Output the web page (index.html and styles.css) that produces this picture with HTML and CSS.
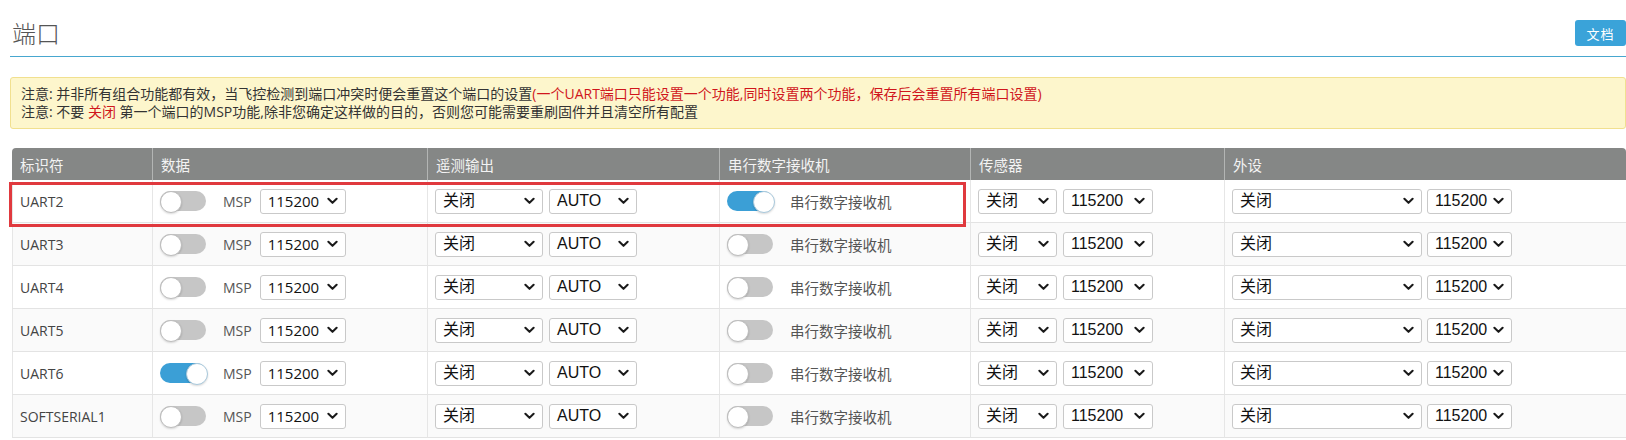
FILE: index.html
```html
<!DOCTYPE html>
<html lang="zh-CN">
<head>
<meta charset="utf-8">
<title>端口</title>
<link rel="stylesheet" href="styles.css">
</head>
<body>
<div class="page">
  <div class="head">
    <h1 class="title">端口</h1>
    <a class="doc-btn">文档</a>
  </div>

  <div class="note">
    <p>注意: 并非所有组合功能都有效，当飞控检测到端口冲突时便会重置这个端口的设置<span class="red">(一个UART端口只能设置一个功能,同时设置两个功能，保存后会重置所有端口设置)</span></p>
    <p>注意: 不要 <span class="red">关闭</span> 第一个端口的MSP功能,除非您确定这样做的目的，否则您可能需要重刷固件并且清空所有配置</p>
  </div>

  <div class="table-wrap">
    <table class="ports">
      <colgroup>
        <col class="c-id"><col class="c-data"><col class="c-tel"><col class="c-rx"><col class="c-sens"><col class="c-per">
      </colgroup>
      <thead>
        <tr><th>标识符</th><th>数据</th><th>遥测输出</th><th>串行数字接收机</th><th>传感器</th><th>外设</th></tr>
      </thead>
      <tbody>
        <tr>
          <td class="id">UART2</td>
          <td><div class="cell"><span class="toggle"></span><span class="lbl">MSP</span><span class="sel s-data"><span>115200</span><svg class="chev" viewBox="0 0 12 8"><path d="M1.5 1.5L6 6l4.5-4.5"/></svg></span></div></td>
          <td><div class="cell g6"><span class="sel s-tel"><span>关闭</span><svg class="chev" viewBox="0 0 12 8"><path d="M1.5 1.5L6 6l4.5-4.5"/></svg></span><span class="sel s-auto"><span>AUTO</span><svg class="chev" viewBox="0 0 12 8"><path d="M1.5 1.5L6 6l4.5-4.5"/></svg></span></div></td>
          <td><div class="cell"><span class="toggle on"></span><span class="rx">串行数字接收机</span></div></td>
          <td><div class="cell g6"><span class="sel s-sens"><span>关闭</span><svg class="chev" viewBox="0 0 12 8"><path d="M1.5 1.5L6 6l4.5-4.5"/></svg></span><span class="sel s-baud"><span>115200</span><svg class="chev" viewBox="0 0 12 8"><path d="M1.5 1.5L6 6l4.5-4.5"/></svg></span></div></td>
          <td><div class="cell g5"><span class="sel s-per"><span>关闭</span><svg class="chev" viewBox="0 0 12 8"><path d="M1.5 1.5L6 6l4.5-4.5"/></svg></span><span class="sel s-pbaud"><span>115200</span><svg class="chev" viewBox="0 0 12 8"><path d="M1.5 1.5L6 6l4.5-4.5"/></svg></span></div></td>
        </tr>
        <tr>
          <td class="id">UART3</td>
          <td><div class="cell"><span class="toggle"></span><span class="lbl">MSP</span><span class="sel s-data"><span>115200</span><svg class="chev" viewBox="0 0 12 8"><path d="M1.5 1.5L6 6l4.5-4.5"/></svg></span></div></td>
          <td><div class="cell g6"><span class="sel s-tel"><span>关闭</span><svg class="chev" viewBox="0 0 12 8"><path d="M1.5 1.5L6 6l4.5-4.5"/></svg></span><span class="sel s-auto"><span>AUTO</span><svg class="chev" viewBox="0 0 12 8"><path d="M1.5 1.5L6 6l4.5-4.5"/></svg></span></div></td>
          <td><div class="cell"><span class="toggle"></span><span class="rx">串行数字接收机</span></div></td>
          <td><div class="cell g6"><span class="sel s-sens"><span>关闭</span><svg class="chev" viewBox="0 0 12 8"><path d="M1.5 1.5L6 6l4.5-4.5"/></svg></span><span class="sel s-baud"><span>115200</span><svg class="chev" viewBox="0 0 12 8"><path d="M1.5 1.5L6 6l4.5-4.5"/></svg></span></div></td>
          <td><div class="cell g5"><span class="sel s-per"><span>关闭</span><svg class="chev" viewBox="0 0 12 8"><path d="M1.5 1.5L6 6l4.5-4.5"/></svg></span><span class="sel s-pbaud"><span>115200</span><svg class="chev" viewBox="0 0 12 8"><path d="M1.5 1.5L6 6l4.5-4.5"/></svg></span></div></td>
        </tr>
        <tr>
          <td class="id">UART4</td>
          <td><div class="cell"><span class="toggle"></span><span class="lbl">MSP</span><span class="sel s-data"><span>115200</span><svg class="chev" viewBox="0 0 12 8"><path d="M1.5 1.5L6 6l4.5-4.5"/></svg></span></div></td>
          <td><div class="cell g6"><span class="sel s-tel"><span>关闭</span><svg class="chev" viewBox="0 0 12 8"><path d="M1.5 1.5L6 6l4.5-4.5"/></svg></span><span class="sel s-auto"><span>AUTO</span><svg class="chev" viewBox="0 0 12 8"><path d="M1.5 1.5L6 6l4.5-4.5"/></svg></span></div></td>
          <td><div class="cell"><span class="toggle"></span><span class="rx">串行数字接收机</span></div></td>
          <td><div class="cell g6"><span class="sel s-sens"><span>关闭</span><svg class="chev" viewBox="0 0 12 8"><path d="M1.5 1.5L6 6l4.5-4.5"/></svg></span><span class="sel s-baud"><span>115200</span><svg class="chev" viewBox="0 0 12 8"><path d="M1.5 1.5L6 6l4.5-4.5"/></svg></span></div></td>
          <td><div class="cell g5"><span class="sel s-per"><span>关闭</span><svg class="chev" viewBox="0 0 12 8"><path d="M1.5 1.5L6 6l4.5-4.5"/></svg></span><span class="sel s-pbaud"><span>115200</span><svg class="chev" viewBox="0 0 12 8"><path d="M1.5 1.5L6 6l4.5-4.5"/></svg></span></div></td>
        </tr>
        <tr>
          <td class="id">UART5</td>
          <td><div class="cell"><span class="toggle"></span><span class="lbl">MSP</span><span class="sel s-data"><span>115200</span><svg class="chev" viewBox="0 0 12 8"><path d="M1.5 1.5L6 6l4.5-4.5"/></svg></span></div></td>
          <td><div class="cell g6"><span class="sel s-tel"><span>关闭</span><svg class="chev" viewBox="0 0 12 8"><path d="M1.5 1.5L6 6l4.5-4.5"/></svg></span><span class="sel s-auto"><span>AUTO</span><svg class="chev" viewBox="0 0 12 8"><path d="M1.5 1.5L6 6l4.5-4.5"/></svg></span></div></td>
          <td><div class="cell"><span class="toggle"></span><span class="rx">串行数字接收机</span></div></td>
          <td><div class="cell g6"><span class="sel s-sens"><span>关闭</span><svg class="chev" viewBox="0 0 12 8"><path d="M1.5 1.5L6 6l4.5-4.5"/></svg></span><span class="sel s-baud"><span>115200</span><svg class="chev" viewBox="0 0 12 8"><path d="M1.5 1.5L6 6l4.5-4.5"/></svg></span></div></td>
          <td><div class="cell g5"><span class="sel s-per"><span>关闭</span><svg class="chev" viewBox="0 0 12 8"><path d="M1.5 1.5L6 6l4.5-4.5"/></svg></span><span class="sel s-pbaud"><span>115200</span><svg class="chev" viewBox="0 0 12 8"><path d="M1.5 1.5L6 6l4.5-4.5"/></svg></span></div></td>
        </tr>
        <tr>
          <td class="id">UART6</td>
          <td><div class="cell"><span class="toggle on"></span><span class="lbl">MSP</span><span class="sel s-data"><span>115200</span><svg class="chev" viewBox="0 0 12 8"><path d="M1.5 1.5L6 6l4.5-4.5"/></svg></span></div></td>
          <td><div class="cell g6"><span class="sel s-tel"><span>关闭</span><svg class="chev" viewBox="0 0 12 8"><path d="M1.5 1.5L6 6l4.5-4.5"/></svg></span><span class="sel s-auto"><span>AUTO</span><svg class="chev" viewBox="0 0 12 8"><path d="M1.5 1.5L6 6l4.5-4.5"/></svg></span></div></td>
          <td><div class="cell"><span class="toggle"></span><span class="rx">串行数字接收机</span></div></td>
          <td><div class="cell g6"><span class="sel s-sens"><span>关闭</span><svg class="chev" viewBox="0 0 12 8"><path d="M1.5 1.5L6 6l4.5-4.5"/></svg></span><span class="sel s-baud"><span>115200</span><svg class="chev" viewBox="0 0 12 8"><path d="M1.5 1.5L6 6l4.5-4.5"/></svg></span></div></td>
          <td><div class="cell g5"><span class="sel s-per"><span>关闭</span><svg class="chev" viewBox="0 0 12 8"><path d="M1.5 1.5L6 6l4.5-4.5"/></svg></span><span class="sel s-pbaud"><span>115200</span><svg class="chev" viewBox="0 0 12 8"><path d="M1.5 1.5L6 6l4.5-4.5"/></svg></span></div></td>
        </tr>
        <tr>
          <td class="id">SOFTSERIAL1</td>
          <td><div class="cell"><span class="toggle"></span><span class="lbl">MSP</span><span class="sel s-data"><span>115200</span><svg class="chev" viewBox="0 0 12 8"><path d="M1.5 1.5L6 6l4.5-4.5"/></svg></span></div></td>
          <td><div class="cell g6"><span class="sel s-tel"><span>关闭</span><svg class="chev" viewBox="0 0 12 8"><path d="M1.5 1.5L6 6l4.5-4.5"/></svg></span><span class="sel s-auto"><span>AUTO</span><svg class="chev" viewBox="0 0 12 8"><path d="M1.5 1.5L6 6l4.5-4.5"/></svg></span></div></td>
          <td><div class="cell"><span class="toggle"></span><span class="rx">串行数字接收机</span></div></td>
          <td><div class="cell g6"><span class="sel s-sens"><span>关闭</span><svg class="chev" viewBox="0 0 12 8"><path d="M1.5 1.5L6 6l4.5-4.5"/></svg></span><span class="sel s-baud"><span>115200</span><svg class="chev" viewBox="0 0 12 8"><path d="M1.5 1.5L6 6l4.5-4.5"/></svg></span></div></td>
          <td><div class="cell g5"><span class="sel s-per"><span>关闭</span><svg class="chev" viewBox="0 0 12 8"><path d="M1.5 1.5L6 6l4.5-4.5"/></svg></span><span class="sel s-pbaud"><span>115200</span><svg class="chev" viewBox="0 0 12 8"><path d="M1.5 1.5L6 6l4.5-4.5"/></svg></span></div></td>
        </tr>
      </tbody>
    </table>
    <div class="highlight"></div>
  </div>
</div>
</body>
</html>
```

FILE: styles.css
```css
* { box-sizing: border-box; }

html, body {
  margin: 0;
  padding: 0;
  background: #ffffff;
}

body {
  font-family: "Open Sans", "Noto Sans CJK SC", sans-serif;
  color: #333333;
  overflow: hidden;
}

.page {
  padding-left: 10px;
  width: 1626px;
}

.head {
  display: flex;
  align-items: center;
  justify-content: space-between;
  height: 57px;
  padding-top: 10px;
  border-bottom: 1px solid #47a7cf;
}

.title {
  margin: 0 0 0 2px;
  font-family: "Noto Sans CJK SC", sans-serif;
  font-weight: 300;
  font-size: 24px;
  line-height: 30px;
  color: #555555;
}

.doc-btn {
  display: flex;
  align-items: center;
  justify-content: center;
  width: 51px;
  height: 26px;
  border-radius: 3px;
  background: #3aa3d9;
  color: #ffffff;
  font-family: "Noto Sans CJK SC", sans-serif;
  font-size: 13px;
  letter-spacing: 1px;
}

.note {
  margin-top: 20px;
  height: 52px;
  padding: 7px 10px;
  border: 1px solid #f1e08f;
  border-radius: 3px;
  background: #fdf6cc;
  font-family: "Open Sans", "Noto Sans CJK SC", sans-serif;
  font-size: 14px;
  line-height: 18px;
  color: #333333;
}

.note p {
  margin: 0;
  white-space: nowrap;
}

.red { color: #d0161c; }

.table-wrap {
  position: relative;
  margin-top: 19px;
  margin-left: 2px;
  width: 1614px;
}

.ports {
  width: 1614px;
  table-layout: fixed;
  border-collapse: separate;
  border-spacing: 0;
}

.c-id { width: 140px; }
.c-data { width: 275px; }
.c-tel { width: 292px; }
.c-rx { width: 251px; }
.c-sens { width: 254px; }
.c-per { width: 402px; }

.ports th {
  height: 32px;
  padding: 0 8px;
  background: #858786;
  color: #f3f3f3;
  font-family: "Noto Sans CJK SC", sans-serif;
  font-weight: 400;
  font-size: 14.5px;
  text-align: left;
  border-left: 1px solid #b3b5b4;
}

.ports th:first-child {
  border-left: none;
  border-top-left-radius: 4px;
}

.ports th:last-child {
  border-top-right-radius: 4px;
}

.ports td {
  height: 43px;
  padding: 0 7px;
  border-bottom: 1px solid #e3e3e3;
  border-left: 1px solid #e6e6e6;
  background: #ffffff;
  vertical-align: middle;
}

.ports tbody tr:nth-child(even) td { background: #fafafa; }

.ports td.id {
  font-size: 14px;
  color: #444444;
  padding-left: 7px;
}

.cell {
  display: flex;
  align-items: center;
}

.g6 { gap: 6px; }
.g5 { gap: 5px; }

.toggle {
  position: relative;
  width: 46px;
  height: 20px;
  border-radius: 10px;
  background: #c6c6c6;
  flex: none;
}

.toggle::after {
  content: "";
  position: absolute;
  left: 0;
  top: 0;
  width: 20px;
  height: 20px;
  border-radius: 50%;
  background: #ffffff;
  border: 1px solid #bdbdbd;
  box-shadow: 0 1px 2px rgba(0, 0, 0, 0.15);
}

.toggle.on { background: #3b9fd6; }
.toggle.on::after { left: 26px; border-color: #a9c9dc; }

.lbl {
  margin-left: 17px;
  margin-right: 8px;
  font-size: 14px;
  color: #555555;
}

.rx {
  margin-left: 17px;
  font-family: "Noto Sans CJK SC", sans-serif;
  font-size: 14.5px;
  color: #555555;
}

.sel {
  display: flex;
  align-items: center;
  justify-content: space-between;
  height: 25px;
  padding: 0 7px 0 7px;
  border: 1px solid #c9c9c9;
  border-radius: 3px;
  background: #ffffff;
  font-family: "Liberation Sans", "Noto Sans CJK SC", sans-serif;
  font-size: 16px;
  color: #111111;
  flex: none;
}

.sel span { line-height: 20px; white-space: nowrap; }

.chev {
  width: 11px;
  height: 8px;
  flex: none;
  fill: none;
  stroke: #1a1a1a;
  stroke-width: 2.2;
  stroke-linecap: round;
  stroke-linejoin: round;
}

.s-data {
  width: 86px;
  font-family: "Open Sans", sans-serif;
  font-size: 15px;
}
.s-tel { width: 108px; }
.s-auto { width: 88px; }
.s-sens { width: 79px; }
.s-baud { width: 90px; }
.s-per { width: 190px; }
.s-pbaud { width: 85px; }

.highlight {
  position: absolute;
  left: -3px;
  top: 34px;
  width: 957px;
  height: 45px;
  border: 3px solid #e0393e;
  pointer-events: none;
}
```
